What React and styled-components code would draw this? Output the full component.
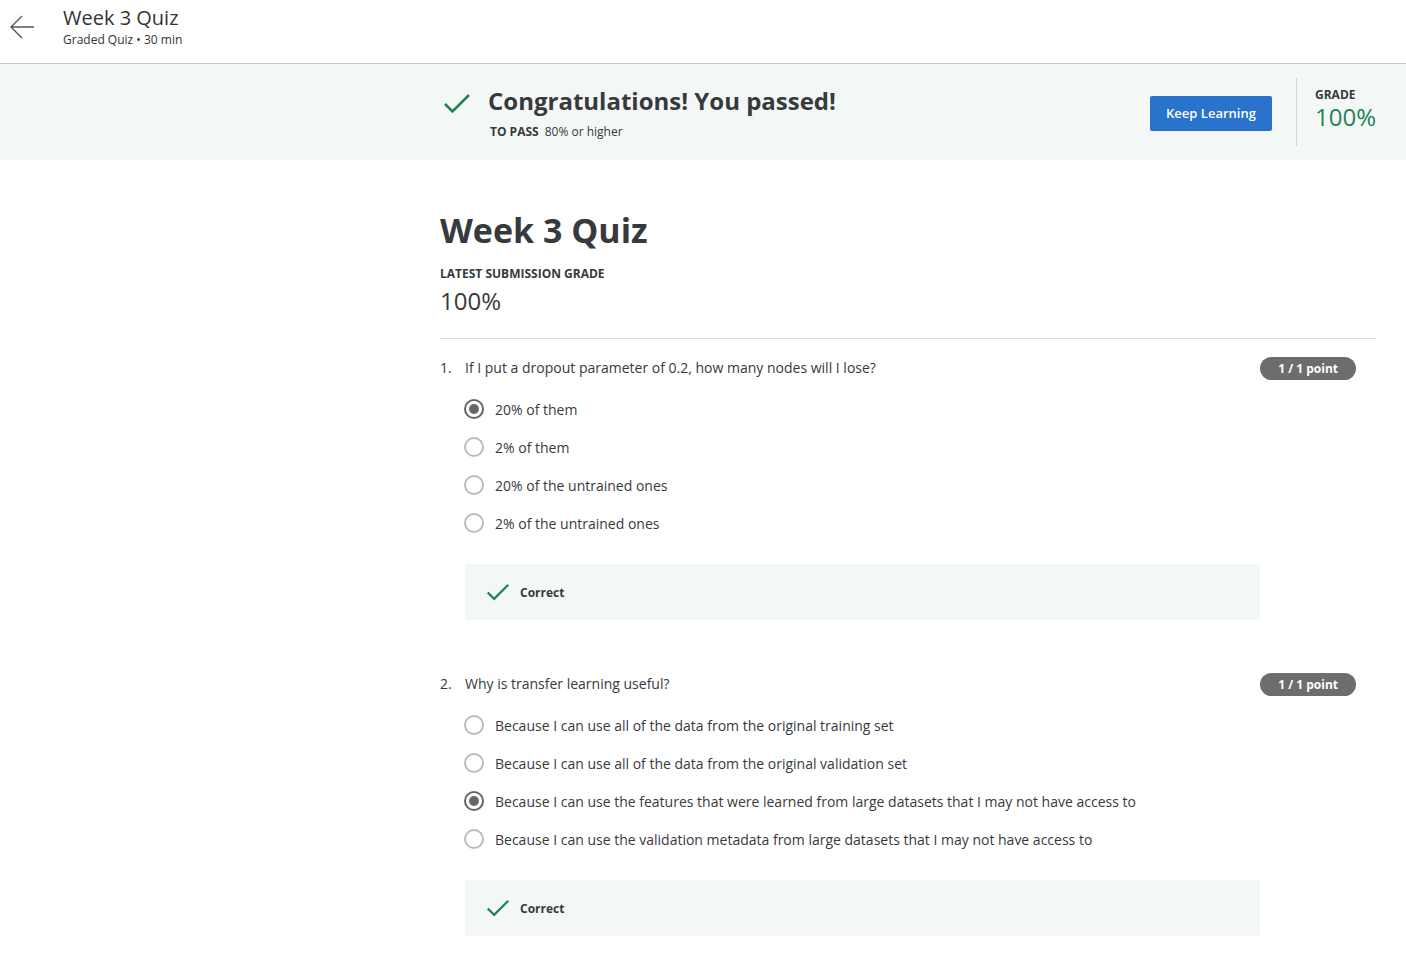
import styled, { createGlobalStyle } from "styled-components";

const GlobalStyle = createGlobalStyle`
  body {
    margin: 0;
    background: #fff;
    font-family: "Open Sans", "Noto Sans", sans-serif;
    color: #373a3c;
  }
`;

const questions = [
  {
    text: "If I put a dropout parameter of 0.2, how many nodes will I lose?",
    options: ["20% of them", "2% of them", "20% of the untrained ones", "2% of the untrained ones"],
    picked: 0,
  },
  {
    text: "Why is transfer learning useful?",
    options: [
      "Because I can use all of the data from the original training set",
      "Because I can use all of the data from the original validation set",
      "Because I can use the features that were learned from large datasets that I may not have access to",
      "Because I can use the validation metadata from large datasets that I may not have access to",
    ],
    picked: 2,
  },
];

function Check({ size = 28 }) {
  return (
    <svg width={size} height={size * 0.75} viewBox="0 0 28 21" fill="none">
      <path d="M2 11 L9.5 18.5 L26 2" stroke="#1f8354" strokeWidth="2.6" />
    </svg>
  );
}

function App() {
  return (
    <>
      <GlobalStyle />
      <Header>
        <BackButton>
          <svg width="26" height="26" viewBox="0 0 26 26" fill="none">
            <path d="M25 13 H2 M13 2 L2 13 L13 24" stroke="#555" strokeWidth="1.4" />
          </svg>
        </BackButton>
        <HeaderText>
          <HeaderTitle>Week 3 Quiz</HeaderTitle>
          <HeaderSub>Graded Quiz • 30 min</HeaderSub>
        </HeaderText>
      </Header>

      <Banner>
        <BannerMain>
          <BannerCheck>
            <Check />
          </BannerCheck>
          <div>
            <BannerTitle>Congratulations! You passed!</BannerTitle>
            <PassLine>
              <b>TO PASS</b>80% or higher
            </PassLine>
          </div>
        </BannerMain>
        <KeepButton>Keep Learning</KeepButton>
        <GradeBox>
          <GradeLabel>GRADE</GradeLabel>
          <GradeValue>100%</GradeValue>
        </GradeBox>
      </Banner>

      <Main>
        <QuizTitle>Week 3 Quiz</QuizTitle>
        <SmallCaps>LATEST SUBMISSION GRADE</SmallCaps>
        <LatestGrade>100%</LatestGrade>
        <Divider />
        {questions.map((q, i) => (
          <Question key={i}>
            <QuestionRow>
              <QNum>{i + 1}.</QNum>
              <QText>{q.text}</QText>
              <Points>1 / 1 point</Points>
            </QuestionRow>
            <Options>
              {q.options.map((o, j) => (
                <Option key={j}>
                  <Radio $checked={j === q.picked} />
                  {o}
                </Option>
              ))}
            </Options>
            <Feedback>
              <Check size={24} />
              <span>Correct</span>
            </Feedback>
          </Question>
        ))}
      </Main>
    </>
  );
}

const Header = styled.header`
  display: flex;
  align-items: flex-start;
  height: 63px;
  border-bottom: 1px solid #c8c8c8;
  box-sizing: content-box;
`;

const BackButton = styled.div`
  width: 26px;
  height: 26px;
  margin: 14px 0 0 9px;
`;

const HeaderText = styled.div`
  margin-left: 28px;
  padding-top: 4px;
`;

const HeaderTitle = styled.div`
  font-size: 20px;
  line-height: 28px;
  color: #333;
`;

const HeaderSub = styled.div`
  margin-top: 1px;
  font-size: 12px;
  line-height: 14px;
  color: #333;
`;

const Banner = styled.section`
  display: flex;
  align-items: center;
  height: 96px;
  background: #f3f8f6;
  padding: 0 30px 0 443px;
`;

const BannerMain = styled.div`
  display: flex;
  align-items: flex-start;
  flex: 1;
`;

const BannerCheck = styled.div`
  width: 28px;
  margin: 9px 17px 0 0;
`;

const BannerTitle = styled.h2`
  margin: 0;
  font-size: 24px;
  line-height: 34px;
  font-weight: 700;
  color: #373a3c;
`;

const PassLine = styled.div`
  margin-top: 5px;
  padding-left: 2px;
  font-size: 12px;
  line-height: 18px;
  color: #373a3c;
  b {
    margin-right: 6px;
  }
`;

const KeepButton = styled.button`
  height: 35px;
  width: 122px;
  margin-top: 2px;
  background: #2a73cc;
  border: none;
  border-radius: 2px;
  color: #fff;
  font-family: "Open Sans", sans-serif;
  font-size: 13px;
  font-weight: 600;
`;

const GradeBox = styled.div`
  margin-left: 24px;
  padding: 9px 0 9px 18px;
  height: 50px;
  border-left: 1px solid #d5d5d5;
`;

const SmallCaps = styled.div`
  font-size: 12px;
  line-height: 18px;
  font-weight: 700;
  color: #373a3c;
`;

const GradeLabel = styled(SmallCaps)`
  line-height: 16px;
`;

const GradeValue = styled.div`
  font-size: 24px;
  line-height: 28px;
  color: #1f8354;
`;

const Main = styled.main`
  padding: 45px 30px 0 440px;
`;

const QuizTitle = styled.h1`
  margin: 0 0 10px;
  font-size: 34px;
  line-height: 50px;
  font-weight: 700;
  color: #373a3c;
`;

const LatestGrade = styled.div`
  margin-top: 2px;
  font-size: 24px;
  line-height: 32px;
  color: #373a3c;
`;

const Divider = styled.hr`
  margin: 21px 0 16px;
  border: none;
  border-top: 1px solid #ddd;
`;

const Question = styled.div`
  padding-right: 20px;
  margin-bottom: 51px;
`;

const QuestionRow = styled.div`
  display: flex;
  align-items: center;
  font-size: 14px;
  line-height: 24px;
`;

const QNum = styled.span`
  width: 25px;
`;

const QText = styled.span`
  flex: 1;
`;

const Points = styled.span`
  background: #6d6d6d;
  color: #fff;
  font-size: 12px;
  font-weight: 700;
  line-height: 23px;
  padding: 0 18px;
  border-radius: 12px;
  margin-top: 2px;
`;

const Options = styled.div`
  display: flex;
  flex-direction: column;
  gap: 14px;
  padding: 17px 0 0 24px;
`;

const Option = styled.label`
  display: flex;
  align-items: center;
  gap: 11px;
  height: 24px;
  font-size: 14px;
  color: #373a3c;
`;

const Radio = styled.span`
  box-sizing: border-box;
  width: 20px;
  height: 20px;
  border-radius: 50%;
  border: 2px solid ${(p) => (p.$checked ? "#666" : "#bbb")};
  position: relative;
  &::after {
    content: "";
    display: ${(p) => (p.$checked ? "block" : "none")};
    position: absolute;
    inset: 3px;
    border-radius: 50%;
    background: #666;
  }
`;

const Feedback = styled.div`
  display: flex;
  align-items: center;
  gap: 10px;
  height: 56px;
  margin: 29px 96px 0 25px;
  padding-left: 21px;
  background: #f3f8f6;
  font-size: 12px;
  font-weight: 700;
  color: #373a3c;
`;

export default App;
